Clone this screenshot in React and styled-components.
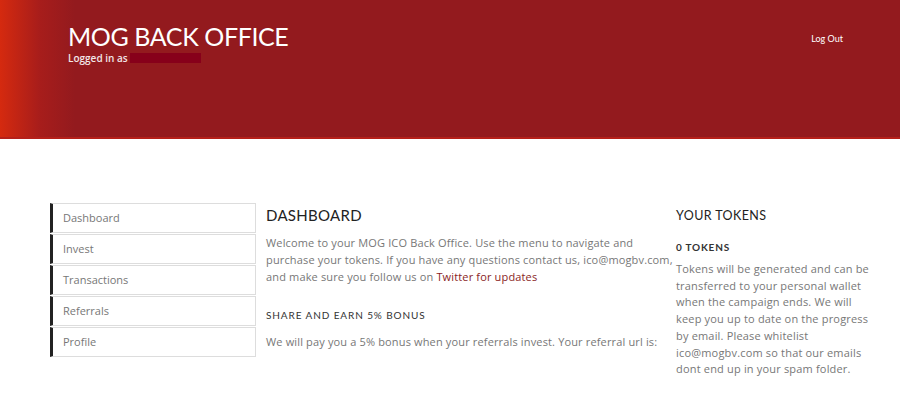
import React from 'react';
import styled, { createGlobalStyle } from 'styled-components';

const GlobalStyle = createGlobalStyle`
    body {
        margin: 0;
        background: #fff;
        font-family: "Open Sans", "Liberation Sans", sans-serif;
    }
`;

const menu = ['Dashboard', 'Invest', 'Transactions', 'Referrals', 'Profile'];

export default function App() {
    return (
        <>
            <GlobalStyle />
            <Header>
                <Brand>
                    <Title>MOG BACK OFFICE</Title>
                    <LoggedIn>
                        Logged in as <Redacted />
                    </LoggedIn>
                </Brand>
                <LogOut href="#">Log Out</LogOut>
            </Header>
            <Content>
                <Sidebar>
                    {menu.map((item) => (
                        <MenuItem key={item}>{item}</MenuItem>
                    ))}
                </Sidebar>
                <Main>
                    <Heading>DASHBOARD</Heading>
                    <Text>
                        Welcome to your MOG ICO Back Office. Use the menu to navigate and
                        purchase your tokens. If you have any questions contact us, ico@mogbv.com,
                        and make sure you follow us on <Link href="#">Twitter for updates</Link>
                    </Text>
                    <SubHeading>SHARE AND EARN 5% BONUS</SubHeading>
                    <Text>We will pay you a 5% bonus when your referrals invest. Your referral url is:</Text>
                </Main>
                <Aside>
                    <Heading small>YOUR TOKENS</Heading>
                    <Count>0 TOKENS</Count>
                    <SideText>
                        Tokens will be generated and can be transferred to your personal wallet
                        when the campaign ends. We will keep you up to date on the progress by
                        email. Please whitelist ico@mogbv.com so that our emails dont end up in
                        your spam folder.
                    </SideText>
                </Aside>
            </Content>
        </>
    );
}

const Header = styled.header`
    height: 137px;
    display: flex;
    justify-content: space-between;
    align-items: flex-start;
    padding: 0 57px 0 68px;
    background: linear-gradient(to right, #d52a0f 0px, #a71d1b 40px, #931a1e 75px, #931a1e 100%);
    border-bottom: 2px solid #b5201a;
`;

const Brand = styled.div`
    padding-top: 22px;
`;

const Title = styled.h1`
    margin: 0;
    font-family: Lato, "Liberation Sans", sans-serif;
    font-weight: 400;
    font-size: 25px;
    letter-spacing: -0.4px;
    line-height: 28px;
    color: #fff;
`;

const LoggedIn = styled.div`
    display: flex;
    align-items: center;
    margin-top: 1px;
    font-size: 10px;
    font-weight: 600;
    color: #f2e6e8;
`;

const Redacted = styled.span`
    display: inline-block;
    width: 71px;
    height: 10px;
    margin-left: 2px;
    background: #87001a;
`;

const LogOut = styled.a`
    margin-top: 33px;
    font-family: Lato, "Liberation Sans", sans-serif;
    font-size: 9px;
    color: #fff;
    text-decoration: none;
`;

const Content = styled.div`
    display: grid;
    grid-template-columns: 206px 420px 196px;
    padding: 64px 0 0 50px;
`;

const Sidebar = styled.nav`
    display: flex;
    flex-direction: column;
    gap: 1px;
`;

const MenuItem = styled.div`
    box-sizing: border-box;
    height: 30px;
    display: flex;
    align-items: center;
    padding: 0 0 1px 10px;
    border: 1px solid #dddddd;
    border-left: 3px solid #222;
    font-size: 11px;
    color: #777;
`;

const Main = styled.section`
    padding: 3px 0 0 10px;
`;

const Aside = styled.aside`
    padding-top: 4px;
`;

const Heading = styled.h2`
    margin: 0 0 ${(p) => (p.small ? '16px' : '10px')};
    font-family: Lato, "Liberation Sans", sans-serif;
    font-weight: 400;
    font-size: ${(p) => (p.small ? '12.5px' : '15px')};
    letter-spacing: ${(p) => (p.small ? '0.4px' : '0.3px')};
    line-height: 18px;
    color: #222;
`;

const SubHeading = styled.h3`
    margin: 24px 0 12px;
    font-family: Lato, "Liberation Sans", sans-serif;
    font-weight: 400;
    font-size: 10px;
    letter-spacing: 0.9px;
    color: #333;
`;

const Count = styled.h4`
    margin: 0 0 8px;
    font-family: Lato, "Liberation Sans", sans-serif;
    font-weight: 700;
    font-size: 10px;
    letter-spacing: 0.8px;
    color: #333;
`;

const Text = styled.p`
    margin: 0;
    font-size: 11px;
    letter-spacing: 0.15px;
    line-height: 17px;
    color: #777;
`;

const SideText = styled(Text)`
    letter-spacing: 0.18px;
    line-height: 16.7px;
`;

const Link = styled.a`
    color: #8a1e1e;
    text-decoration: none;
`;
